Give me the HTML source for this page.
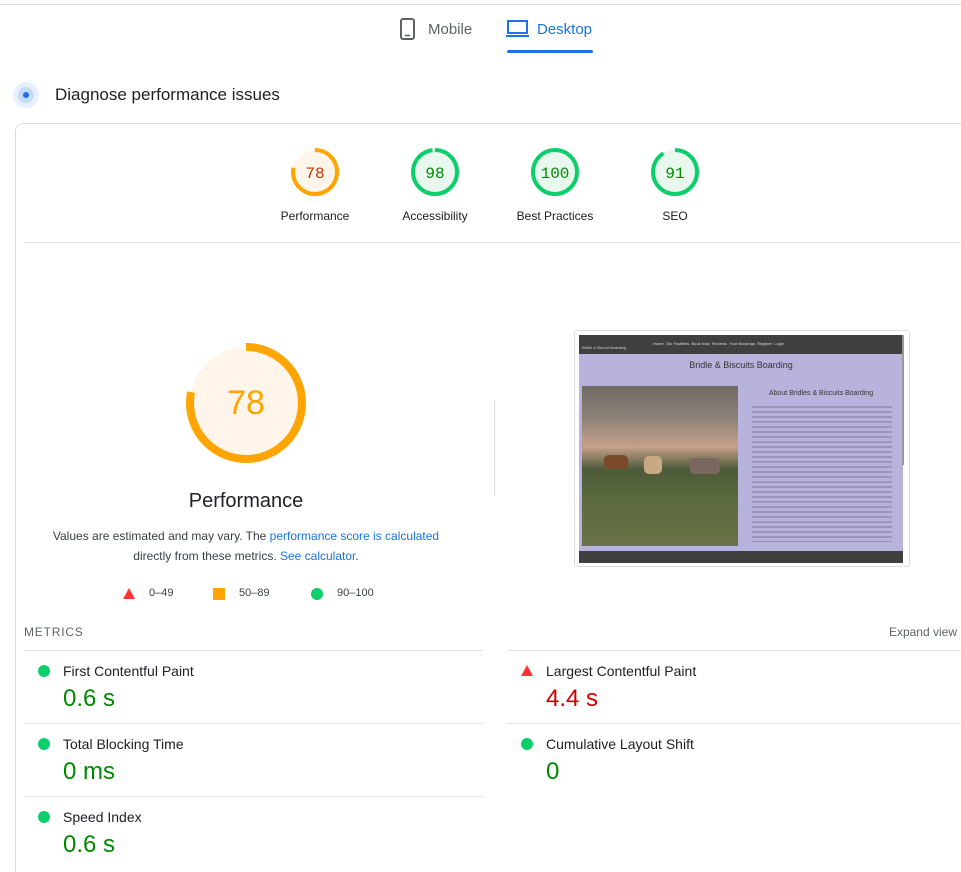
<!DOCTYPE html>
<html><head><meta charset="utf-8"><style>
*{margin:0;padding:0;box-sizing:border-box}
html{height:872px;overflow:hidden}
body{width:961px;height:872px;background:#fff;font-family:"Liberation Sans",Arial,sans-serif;position:relative;overflow:hidden;color:#202124}
.a{position:absolute}
.lbl{font-size:12px;color:#202124;text-align:center;width:120px}
.mt{font-size:14px;color:#202124}
.mv{font-size:24px}
.hr{height:1px;background:#e0e0e0}
.dot{width:12px;height:12px;border-radius:50%;background:#0cce6b}
</style></head><body>
<div class="a hr" style="left:0;top:4px;width:961px;background:#dadce0"></div>
<svg class="a" style="left:399px;top:18px" width="18" height="22" viewBox="0 0 18 22"><rect x="2" y="1" width="13" height="20" rx="2" fill="none" stroke="#5f6368" stroke-width="2"/><line x1="6" y1="17.5" x2="11" y2="17.5" stroke="#5f6368" stroke-width="1.5"/></svg>
<div class="a" style="left:428px;top:21px;font-size:15px;color:#5f6368">Mobile</div>
<svg class="a" style="left:506px;top:19px" width="24" height="20" viewBox="0 0 24 20"><rect x="2" y="2" width="19" height="12" fill="none" stroke="#1a73e8" stroke-width="2"/><line x1="0" y1="17" x2="23" y2="17" stroke="#1a73e8" stroke-width="2"/></svg>
<div class="a" style="left:537px;top:21px;font-size:15px;color:#1a73e8">Desktop</div>
<div class="a" style="left:507px;top:50px;width:86px;height:3px;background:#1a73e8;border-radius:2px"></div>
<div class="a" style="left:13px;top:82px;width:26px;height:26px;border-radius:50%;background:#e8f0fe"></div>
<div class="a" style="left:18px;top:87px;width:16px;height:16px;border-radius:50%;background:#c6dafc"></div>
<div class="a" style="left:23px;top:92px;width:6px;height:6px;border-radius:50%;background:#1a73e8"></div>
<div class="a" style="left:55px;top:85px;font-size:17px;color:#202124">Diagnose performance issues</div>
<div class="a" style="left:15px;top:123px;width:960px;height:749px;border:1px solid #dadce0;border-bottom:none;border-radius:8px 8px 0 0"></div>
<div class="a hr" style="left:24px;top:242px;width:937px"></div>
<svg class="a" style="left:0;top:140px" width="961" height="60">
<g font-family="Liberation Mono,monospace" font-size="16" text-anchor="middle">
<circle cx="315" cy="32" r="22" fill="#fff5ea"/>
<circle cx="315" cy="32" r="22" fill="none" stroke="#ffa400" stroke-width="4" stroke-dasharray="107.8 200" transform="rotate(-90 315 32)"/>
<text x="315" y="38" fill="#c33300">78</text>
<circle cx="435" cy="32" r="22" fill="#e8f8ee"/>
<circle cx="435" cy="32" r="22" fill="none" stroke="#0cce6b" stroke-width="4" stroke-dasharray="135.5 200" transform="rotate(-90 435 32)"/>
<text x="435" y="38" fill="#008800">98</text>
<circle cx="555" cy="32" r="22" fill="#e8f8ee"/>
<circle cx="555" cy="32" r="22" fill="none" stroke="#0cce6b" stroke-width="4"/>
<text x="555" y="38" fill="#008800">100</text>
<circle cx="675" cy="32" r="22" fill="#e8f8ee"/>
<circle cx="675" cy="32" r="22" fill="none" stroke="#0cce6b" stroke-width="4" stroke-dasharray="125.8 200" transform="rotate(-90 675 32)"/>
<text x="675" y="38" fill="#008800">91</text>
</g></svg>
<div class="a lbl" style="left:255px;top:209px">Performance</div>
<div class="a lbl" style="left:375px;top:209px">Accessibility</div>
<div class="a lbl" style="left:495px;top:209px">Best Practices</div>
<div class="a lbl" style="left:615px;top:209px">SEO</div>
<svg class="a" style="left:180px;top:337px" width="132" height="132">
<circle cx="66" cy="66" r="56" fill="#fff5ea"/>
<circle cx="66" cy="66" r="56" fill="none" stroke="#ffa400" stroke-width="8" stroke-dasharray="274.5 400" transform="rotate(-90 66 66)"/>
<text x="66" y="77" text-anchor="middle" font-family="Liberation Sans,sans-serif" font-size="34" fill="#ffa400">78</text>
</svg>
<div class="a" style="left:146px;top:490px;width:200px;text-align:center;font-size:20px;color:#202124">Performance</div>
<div class="a" style="left:40px;top:526px;width:412px;text-align:center;font-size:12px;line-height:20px;color:#3c4043">Values are estimated and may vary. The <span style="color:#1a73e8">performance score is calculated</span> directly from these metrics. <span style="color:#1a73e8">See calculator</span>.</div>
<svg class="a" style="left:122px;top:587px" width="14" height="13"><polygon points="7,1 13,12 1,12" fill="#ff3333"/></svg>
<div class="a" style="left:149px;top:587px;font-size:11px;color:#3c4043">0–49</div>
<div class="a" style="left:213px;top:588px;width:12px;height:12px;background:#ffa400"></div>
<div class="a" style="left:239px;top:587px;font-size:11px;color:#3c4043">50–89</div>
<div class="a dot" style="left:311px;top:588px"></div>
<div class="a" style="left:337px;top:587px;font-size:11px;color:#3c4043">90–100</div>
<div class="a" style="left:494px;top:400px;width:1px;height:96px;background:#dadce0"></div>
<div class="a" style="left:574px;top:330px;width:336px;height:237px;border:1px solid #dadce0;border-radius:3px;background:#fff"></div>
<div class="a" style="left:579px;top:335px;width:324px;height:228px;background:#b8b3dc"></div>
<div class="a" style="left:579px;top:335px;width:324px;height:19px;background:#3f3f3f"></div>
<div class="a" style="left:653px;top:341px;font-size:4px;color:#ddd;white-space:nowrap">Home &nbsp;Our Facilities &nbsp;Book Now &nbsp;Reviews &nbsp;Your Bookings &nbsp;Register &nbsp;Login</div>
<div class="a" style="left:582px;top:345px;font-size:4px;color:#ccc;font-style:italic">Bridle &amp; Biscuit Boarding</div>
<div class="a" style="left:579px;top:360px;width:324px;text-align:center;font-size:9px;color:#333">Bridle &amp; Biscuits Boarding</div>
<div class="a" style="left:582px;top:386px;width:156px;height:160px;background:linear-gradient(180deg,#6e6a62 0%,#8c8178 20%,#c7a08a 38%,#4c5a3a 52%,#5a6a3c 70%,#6a7248 100%)"></div>
<div class="a" style="left:604px;top:455px;width:24px;height:14px;background:#7a4a2a;border-radius:5px"></div>
<div class="a" style="left:644px;top:456px;width:18px;height:18px;background:#c9a886;border-radius:5px"></div>
<div class="a" style="left:690px;top:458px;width:30px;height:16px;background:#7a6860;border-radius:5px"></div>
<div class="a" style="left:742px;top:390px;width:158px;text-align:center;font-size:7px;color:#333">About Bridles &amp; Biscuits Boarding</div>
<div class="a" style="left:752px;top:406px;width:140px;height:136px;background:repeating-linear-gradient(180deg,#8e89ad 0 2px,#b8b3dc 2px 5px);opacity:.7"></div>
<div class="a" style="left:579px;top:551px;width:324px;height:12px;background:#3f3f3f"></div>
<div class="a" style="left:902px;top:335px;width:2px;height:130px;background:#999"></div>
<div class="a" style="left:24px;top:625px;font-size:12px;letter-spacing:.8px;color:#5f6368">METRICS</div>
<div class="a" style="left:881px;top:625px;width:76px;text-align:right;font-size:12px;color:#5f6368">Expand view</div>
<div class="a hr" style="left:24px;top:650px;width:459px"></div>
<div class="a hr" style="left:507px;top:650px;width:454px"></div>
<div class="a hr" style="left:24px;top:723px;width:459px"></div>
<div class="a hr" style="left:507px;top:723px;width:454px"></div>
<div class="a hr" style="left:24px;top:796px;width:459px"></div>
<div class="a dot" style="left:38px;top:665px"></div>
<div class="a mt" style="left:63px;top:663px">First Contentful Paint</div>
<div class="a mv" style="left:63px;top:685px;color:#008800">0.6 s</div>
<div class="a dot" style="left:38px;top:738px"></div>
<div class="a mt" style="left:63px;top:736px">Total Blocking Time</div>
<div class="a mv" style="left:63px;top:758px;color:#008800">0 ms</div>
<div class="a dot" style="left:38px;top:811px"></div>
<div class="a mt" style="left:63px;top:809px">Speed Index</div>
<div class="a mv" style="left:63px;top:831px;color:#008800">0.6 s</div>
<svg class="a" style="left:520px;top:664px" width="14" height="13"><polygon points="7,1 13,12 1,12" fill="#ff3333"/></svg>
<div class="a mt" style="left:546px;top:663px">Largest Contentful Paint</div>
<div class="a mv" style="left:546px;top:685px;color:#cc0000">4.4 s</div>
<div class="a dot" style="left:521px;top:738px"></div>
<div class="a mt" style="left:546px;top:736px">Cumulative Layout Shift</div>
<div class="a mv" style="left:546px;top:758px;color:#008800">0</div>
</body></html>
